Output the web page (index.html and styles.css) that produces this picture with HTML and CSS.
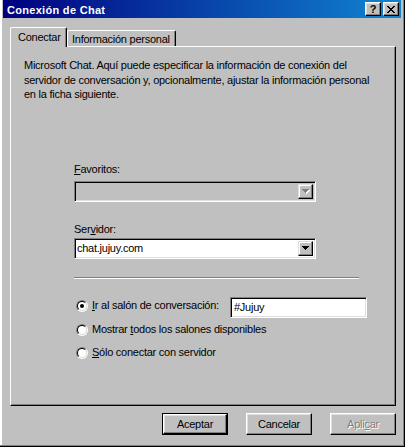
FILE: index.html
```html
<!DOCTYPE html>
<html lang="es">
<head>
<meta charset="utf-8">
<title>Conexión de Chat</title>
<link rel="stylesheet" href="styles.css">
</head>
<body>
<div class="window">
  <div class="titlebar">
    <span class="title">Conexión de Chat</span>
    <div class="caption-buttons">
      <span class="cap-btn help">?</span>
      <span class="cap-btn close">
        <svg width="8" height="7" viewBox="0 0 8 7" shape-rendering="crispEdges"><path d="M0 0h2v1h1v1h2v-1h1v-1h2v1h-1v1h-1v1h-1v1h1v1h1v1h1v1h-2v-1h-1v-1h-2v1h-1v1h-2v-1h1v-1h1v-1h1v-1h-1v-1h-1v-1h-1z" fill="#000"/></svg>
      </span>
    </div>
  </div>

  <div class="tabs">
    <div class="tab tab-active">Conectar</div>
    <div class="tab tab-inactive">Información personal</div>
  </div>

  <div class="panel">
    <p class="desc">Microsoft Chat. Aquí puede especificar la información de conexión del servidor de conversación y, opcionalmente, ajustar la información personal en la ficha siguiente.</p>

    <div class="form">
      <div class="label label-fav"><u>F</u>avoritos:</div>
      <div class="combo combo-disabled">
        <span class="combo-text"></span>
        <span class="drop-btn">
          <svg width="7" height="4" viewBox="0 0 7 4" shape-rendering="crispEdges"><path d="M0 0h7v1h-1v1h-1v1h-1v1h-1v-1h-1v-1h-1v-1h-1z" fill="#808080"/></svg>
        </span>
      </div>

      <div class="label label-srv">Ser<u>v</u>idor:</div>
      <div class="combo">
        <span class="combo-text">chat.jujuy.com</span>
        <span class="drop-btn">
          <svg width="7" height="4" viewBox="0 0 7 4" shape-rendering="crispEdges"><path d="M0 0h7v1h-1v1h-1v1h-1v1h-1v-1h-1v-1h-1v-1h-1z" fill="#000"/></svg>
        </span>
      </div>

      <div class="separator"></div>

      <div class="radio-row row1">
        <span class="radio"><span class="radio-inner"><span class="dot"></span></span></span>
        <span class="radio-label wide"><u>I</u>r al salón de conversación:</span>
        <span class="textbox">#Jujuy</span>
      </div>
      <div class="radio-row row2">
        <span class="radio"><span class="radio-inner"></span></span>
        <span class="radio-label">Mostrar <u>t</u>odos los salones disponibles</span>
      </div>
      <div class="radio-row row3">
        <span class="radio"><span class="radio-inner"></span></span>
        <span class="radio-label"><u>S</u>ólo conectar con servidor</span>
      </div>
    </div>
  </div>

  <div class="buttons">
    <div class="btn-default"><div class="btn">Aceptar</div></div>
    <div class="btn">Cancelar</div>
    <div class="btn btn-disabled">Apli<u>c</u>ar</div>
  </div>
</div>
</body>
</html>
```

FILE: styles.css
```css
* { box-sizing: border-box; }

html, body {
  margin: 0;
  padding: 0;
  background: #c0c0c0;
}

body {
  font-family: "Liberation Sans", Arial, sans-serif;
  font-size: 11px;
  letter-spacing: -0.25px;
  color: #000;
}

.window {
  width: 405px;
  height: 447px;
  background: #c0c0c0;
  border-right: 1px solid #000;
  border-bottom: 1px solid #000;
  box-shadow: inset -1px -1px 0 #808080, inset 2px 0 0 #fff, inset 1px 0 0 #dfdfdf;
  padding: 0 3px 3px 3px;
  display: flex;
  flex-direction: column;
}

/* Title bar */
.titlebar {
  height: 18px;
  background: linear-gradient(to right, #000080, #1084d0);
  display: flex;
  align-items: flex-start;
  justify-content: space-between;
  padding: 0 2px 0 4px;
}

.title {
  color: #fff;
  font-weight: bold;
  font-size: 11px;
  line-height: 16px;
  padding-top: 2px;
  letter-spacing: 0.3px;
}

.caption-buttons {
  display: flex;
  gap: 2px;
  padding-top: 2px;
}

.cap-btn {
  width: 16px;
  height: 14px;
  background: #c0c0c0;
  border-top: 1px solid #fff;
  border-left: 1px solid #fff;
  border-right: 1px solid #000;
  border-bottom: 1px solid #000;
  box-shadow: inset -1px -1px 0 #808080, inset 1px 1px 0 #dfdfdf;
  display: flex;
  align-items: center;
  justify-content: center;
}

.help {
  font-weight: bold;
  font-size: 11px;
  line-height: 12px;
  letter-spacing: 0;
}

.close svg { display: block; }

/* Tabs */
.tabs {
  display: flex;
  align-items: flex-end;
  margin: 9px 0 -1px 7px;
  position: relative;
  z-index: 1;
}

.tab {
  background: #c0c0c0;
  border-top: 1px solid #fff;
  border-left: 1px solid #fff;
  border-right: 1px solid #000;
  box-shadow: inset -1px 0 0 #808080;
  border-radius: 2px 2px 0 0;
  line-height: 14px;
}

.tab-active {
  width: 57px;
  height: 20px;
  padding: 2px 0 0 7px;
}

.tab-inactive {
  width: 109px;
  height: 16px;
  padding: 1px 0 0 4px;
  margin-bottom: 1px;
}

/* Panel */
.panel {
  margin: 0 5px 0 7px;
  height: 360px;
  border-top: 1px solid #fff;
  border-left: 1px solid #fff;
  border-right: 1px solid #000;
  border-bottom: 1px solid #000;
  box-shadow: inset -1px -1px 0 #808080;
  padding: 11px 5px 0 13px;
}

.desc {
  margin: 0;
  line-height: 14.6px;
  width: 358px;
}

.form {
  margin-left: 50px;
  display: flex;
  flex-direction: column;
  align-items: flex-start;
}

.label {
  line-height: 14px;
}

.label-fav { margin-top: 60px; }
.label-srv { margin-top: 20px; }

.combo {
  width: 242px;
  height: 21px;
  background: #fff;
  border-top: 1px solid #808080;
  border-left: 1px solid #808080;
  border-right: 1px solid #fff;
  border-bottom: 1px solid #fff;
  box-shadow: inset 1px 1px 0 #000, inset -1px -1px 0 #dfdfdf;
  padding: 2px;
  display: flex;
  align-items: stretch;
  margin-top: 2px;
}

.combo-disabled {
  background: #c0c0c0;
  margin-top: 5px;
}

.combo-text {
  flex: 1;
  line-height: 15px;
}

.drop-btn {
  width: 15px;
  background: #c0c0c0;
  border-top: 1px solid #dfdfdf;
  border-left: 1px solid #dfdfdf;
  border-right: 1px solid #000;
  border-bottom: 1px solid #000;
  box-shadow: inset -1px -1px 0 #808080, inset 1px 1px 0 #fff;
  display: flex;
  align-items: center;
  justify-content: center;
}

.drop-btn svg { display: block; }

.combo-disabled .drop-btn svg { filter: drop-shadow(1px 1px 0 #fff); }

.separator {
  margin-top: 18px;
  width: 285px;
  height: 2px;
  border-top: 1px solid #808080;
  border-bottom: 1px solid #fff;
}

.radio-row {
  display: flex;
  align-items: flex-start;
}

.row1 { margin-top: 18px; height: 21px; }
.row1 .radio { margin-top: 3px; }
.row1 .radio-label { margin-top: 1px; }
.row2 { margin-top: 4px; }
.row3 { margin-top: 9px; }

.radio {
  width: 12px;
  height: 12px;
  margin: 2px 4px 0 2px;
  border-radius: 50%;
  border: 1px solid;
  border-color: #808080 #fff #fff #808080;
  flex-shrink: 0;
  display: flex;
}

.radio-inner {
  flex: 1;
  border-radius: 50%;
  border: 1px solid;
  border-color: #000 #dfdfdf #dfdfdf #000;
  background: #fff;
  display: flex;
  align-items: center;
  justify-content: center;
}

.dot {
  width: 4px;
  height: 4px;
  border-radius: 50%;
  background: #000;
}

.radio-label {
  line-height: 14px;
  white-space: nowrap;
}

.radio-label.wide { width: 138px; }

.textbox {
  width: 137px;
  height: 21px;
  background: #fff;
  border-top: 1px solid #808080;
  border-left: 1px solid #808080;
  border-right: 1px solid #fff;
  border-bottom: 1px solid #fff;
  box-shadow: inset 1px 1px 0 #000, inset -1px -1px 0 #dfdfdf;
  padding: 2px 3px;
  line-height: 15px;
}

/* Buttons */
.buttons {
  display: flex;
  justify-content: flex-end;
  align-items: flex-start;
  gap: 18px;
  margin: 7px 5px 0 0;
}

.btn {
  width: 66px;
  height: 22px;
  background: #c0c0c0;
  border-top: 1px solid #fff;
  border-left: 1px solid #fff;
  border-right: 1px solid #000;
  border-bottom: 1px solid #000;
  box-shadow: inset -1px -1px 0 #808080, inset 1px 1px 0 #dfdfdf;
  display: flex;
  align-items: center;
  justify-content: center;
  line-height: 14px;
}

.btn-default {
  border: 1px solid #000;
}

.btn-default .btn {
  width: 64px;
  height: 20px;
}

.btn-disabled {
  color: #808080;
  text-shadow: 1px 1px 0 #fff;
}
```
